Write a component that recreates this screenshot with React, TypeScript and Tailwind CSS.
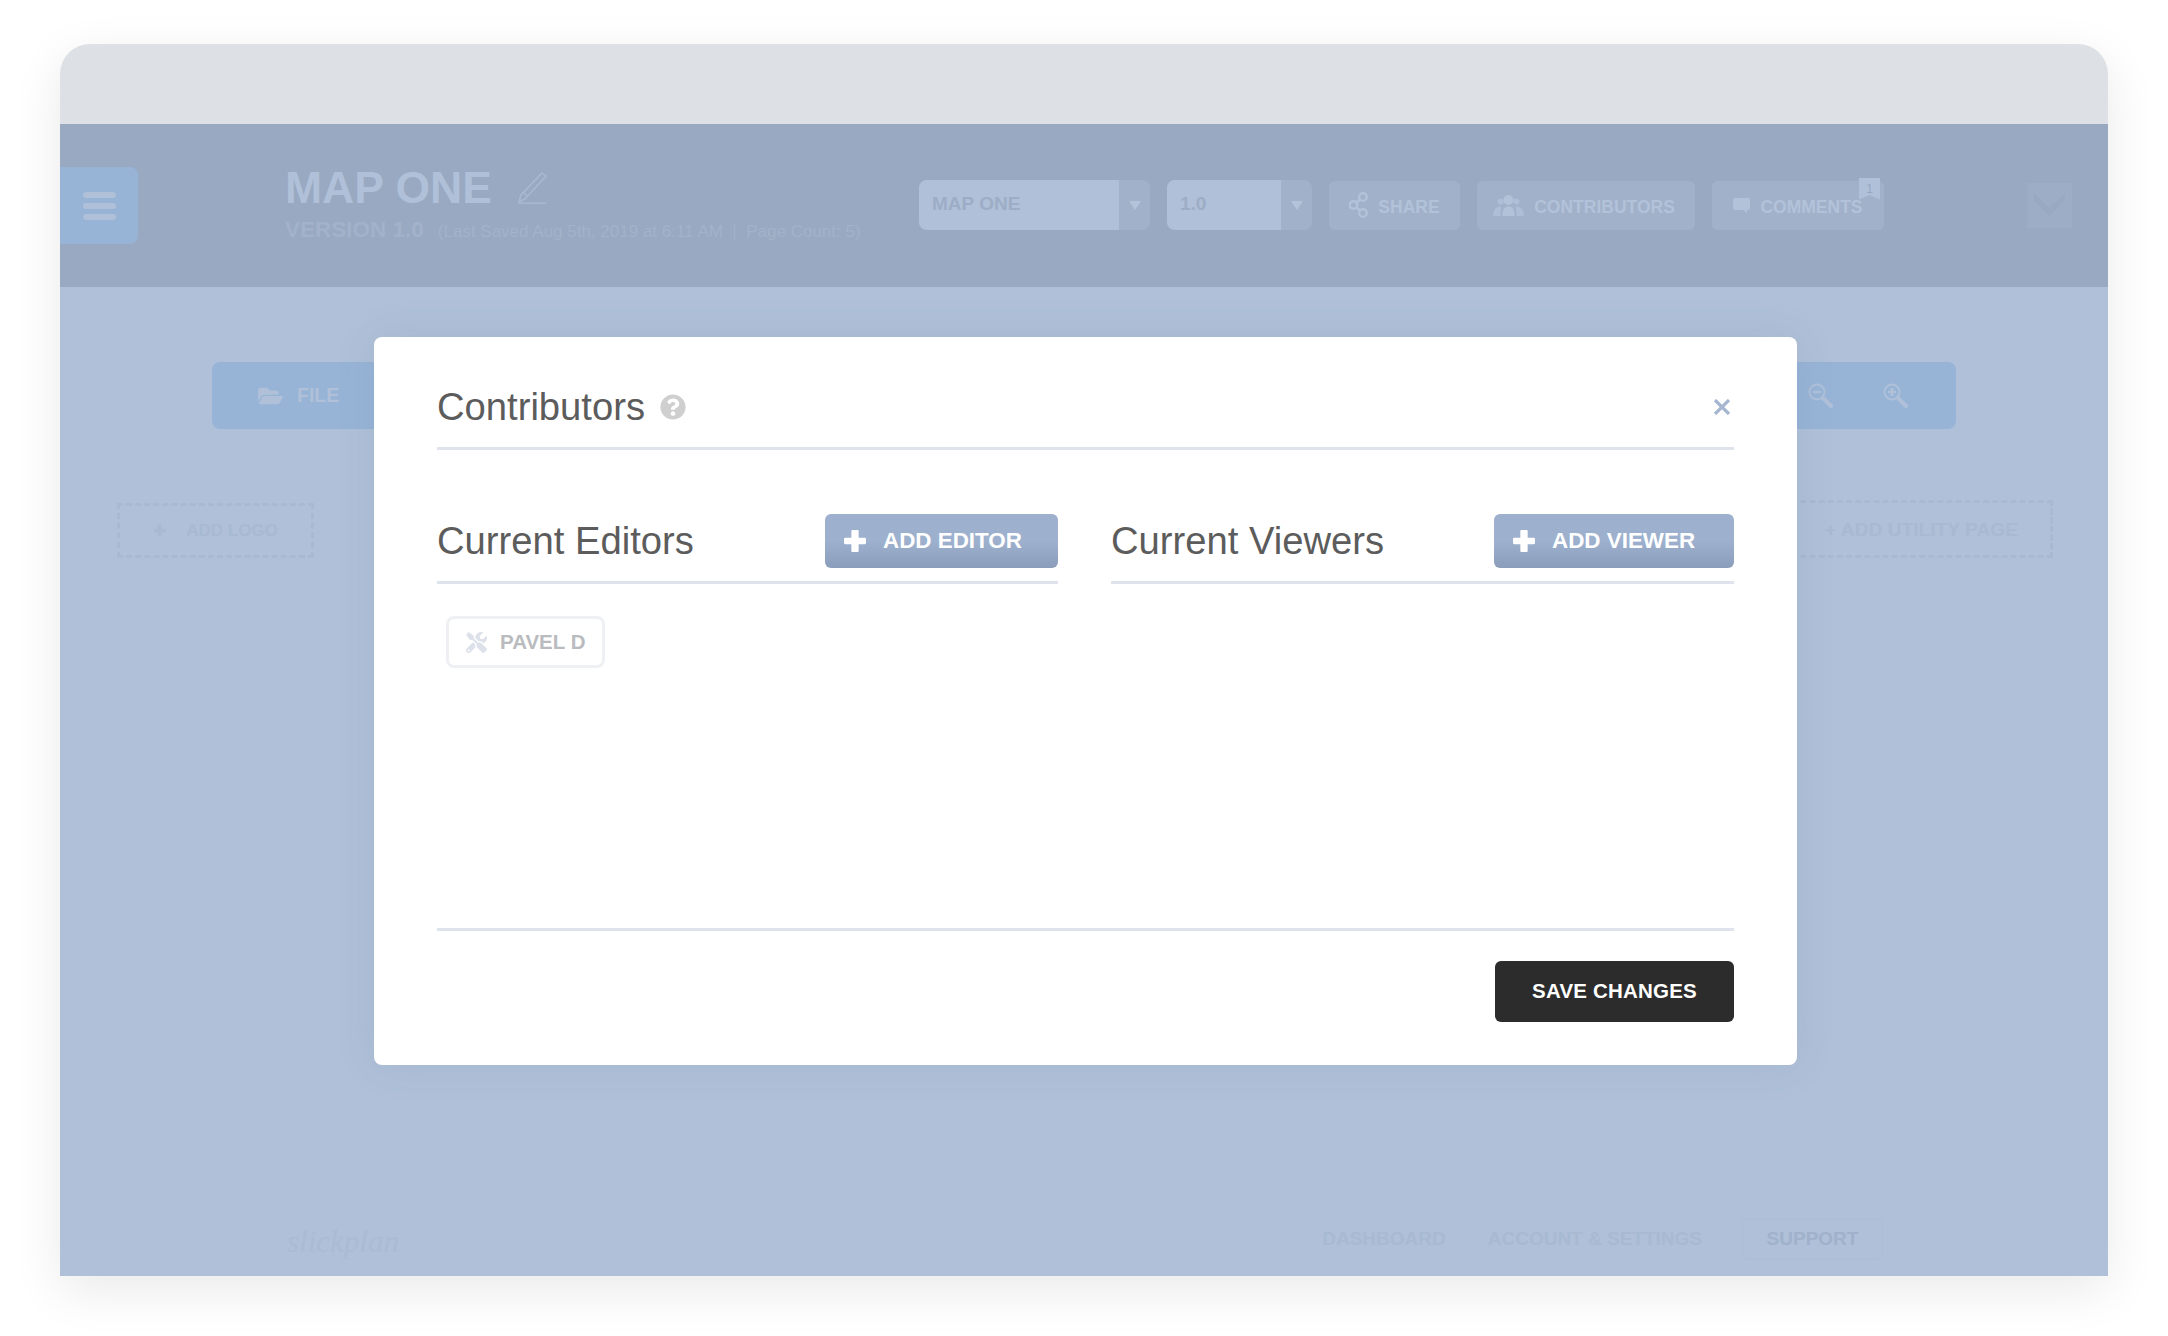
import React from 'react';
import { FaFolderOpen, FaQuestionCircle, FaTools } from 'react-icons/fa';

const PlusIcon = ({ className }: { className: string }) => (
  <svg viewBox="0 0 23 23" className={className} fill="currentColor">
    <path d="M9 1h5a1 1 0 0 1 1 1v6.500h6a1 1 0 0 1 1 1v4a1 1 0 0 1-1 1h-6V21a1 1 0 0 1-1 1H9a1 1 0 0 1-1-1v-6.500H2a1 1 0 0 1-1-1v-4a1 1 0 0 1 1-1h6V2a1 1 0 0 1 1-1z" />
  </svg>
);

const Arrow = () => (
  <svg viewBox="0 0 12 10" className="w-3 h-2.5 text-[#b4c3da]" fill="currentColor">
    <path d="M0 1h12L6 10z" />
  </svg>
);

const ShareIcon = () => (
  <svg viewBox="0 0 19 26" className="w-[19px] h-[26px] text-[#b2c2d9]" fill="none" stroke="currentColor" strokeWidth="2.4">
    <circle cx="14" cy="5" r="3.800" />
    <circle cx="4.500" cy="13" r="3.800" />
    <circle cx="14" cy="21" r="3.800" />
    <path d="M11 7.500 7.500 10.500M7.500 15.500l3.500 3" />
  </svg>
);

const PeopleIcon = () => (
  <svg viewBox="0 0 31 21" className="w-[31px] h-[21px] text-[#b2c2d9]" fill="currentColor">
    <circle cx="15.500" cy="5" r="5" />
    <path d="M9.500 21c0-6 1-9.500 6-9.500s6 3.500 6 9.500z" />
    <circle cx="7.500" cy="6.500" r="3" opacity=".8" />
    <circle cx="23.500" cy="6.500" r="3" opacity=".8" />
    <path d="M0 21c.5-4 1.500-9.500 7.500-9.500.7 0 1 .2 1 .2C7.500 14 7.500 17 7.500 21zM31 21c-.5-4-1.500-9.500-7.500-9.500-.7 0-1 .2-1 .2 1 2.300 1 5.300 1 9.300z" opacity=".8" />
  </svg>
);

const CommentIcon = () => (
  <svg viewBox="0 0 17 15" className="w-[17px] h-[15px] text-[#b2c2d9]" fill="currentColor">
    <path d="M2 0h13a2 2 0 0 1 2 2v8a2 2 0 0 1-2 2h-1v3l-3.500-3H2a2 2 0 0 1-2-2V2a2 2 0 0 1 2-2z" />
  </svg>
);

const PencilIcon = () => (
  <svg viewBox="0 0 32 32" className="w-8 h-8 text-[#a8b9d1]" fill="none" stroke="currentColor" strokeWidth="1.500">
    <path d="M26 1l4 3L9 27l-6 3 2-7zM7.500 20.500l4 3.500" />
    <path d="M2 31.200h28" />
  </svg>
);

// lens with a thick handle, the sign is what differs between in and out
const MagnifierIcon = ({ plus }: { plus?: boolean }) => (
  <svg viewBox="0 0 25 25" className="w-[25px] h-[25px] text-[#afc0d8]" fill="none" stroke="currentColor">
    <circle cx="9" cy="9" r="7.500" strokeWidth="2" />
    <path d="M15 15l8 8" strokeWidth="4" strokeLinecap="round" />
    <path d={plus ? 'M5 9h8M9 5v8' : 'M5 9h8'} strokeWidth="2.500" />
  </svg>
);

const HeaderButton = ({ width, icon, label }: { width: string; icon: React.ReactNode; label: string }) => (
  <div className={`${width} h-[49px] flex items-center justify-center gap-[10px] rounded-md bg-[#a2b1ca] text-[17.500px] font-bold text-[#b2c2d9]`}>
    {icon}
    <span className="mt-[4px]">{label}</span>
  </div>
);

const AddButton = ({ width, label }: { width: string; label: string }) => (
  <button className={`${width} h-[54px] pl-[18px] flex items-center gap-[16px] rounded-md bg-gradient-to-b from-[#9db1ce] from-50% to-[#8a9dbb] text-white text-[22.400px] font-bold`}>
    <PlusIcon className="w-[24px] h-[24px]" />
    {label}
  </button>
);

export default function App() {
  return (
    <div className="h-[1336px] w-[2168px] overflow-hidden bg-white pt-[44px] pl-[60px] font-['Liberation_Sans',Arial,sans-serif]">
      <div className="w-[2048px] h-[1232px] flex flex-col rounded-t-[30px] bg-[#dde0e5] shadow-[0_14px_50px_rgba(0,0,0,0.09)]">
        <div className="h-[80px] shrink-0" />

        <header className="h-[163px] shrink-0 flex items-center bg-[#99a9c1]">
          <div className="w-[78px] h-[77px] flex flex-col items-center justify-center gap-[5px] rounded-r-lg bg-[#97b4d6]">
            <div className="w-[33px] h-[6px] rounded-sm bg-[#afc0d8]" />
            <div className="w-[33px] h-[6px] rounded-sm bg-[#afc0d8]" />
            <div className="w-[33px] h-[6px] rounded-sm bg-[#afc0d8]" />
          </div>

          <div className="w-[781px] pl-[147px] shrink-0 whitespace-nowrap">
            <div className="mt-[1px] flex items-center gap-[24px] h-[44px]">
              <span className="text-[44.500px] leading-[44px] font-bold text-[#afc0d8]">MAP ONE</span>
              <PencilIcon />
            </div>
            <div className="mt-[3px] flex items-baseline gap-[14px] text-[#a3b2ca]">
              <span className="text-[22.500px] font-bold">VERSION 1.0</span>
              <span className="text-[17px]">(Last Saved Aug 5th, 2019 at 6:11 AM &nbsp;|&nbsp; Page Count: 5)</span>
            </div>
          </div>

          <div className="mb-[1px] flex items-center">
            <div className="w-[231px] h-[50px] flex rounded-lg bg-[#a2b1ca]">
              <div className="w-[200px] pl-[13px] pb-[1px] flex items-center rounded-l-lg bg-[#afc0d8] text-[19px] font-bold text-[#9dadc6]">MAP ONE</div>
              <div className="flex-1 flex items-center justify-center">
                <Arrow />
              </div>
            </div>
            <div className="ml-[17px] w-[145px] h-[50px] flex rounded-lg bg-[#a2b1ca]">
              <div className="w-[114px] pl-[13px] pb-[1px] flex items-center rounded-l-lg bg-[#afc0d8] text-[19px] font-bold text-[#9dadc6]">1.0</div>
              <div className="flex-1 flex items-center justify-center">
                <Arrow />
              </div>
            </div>
            <div className="ml-[17px] flex items-center gap-[17px]">
              <HeaderButton width="w-[131px]" icon={<ShareIcon />} label="SHARE" />
              <HeaderButton width="w-[218px] pr-[4px]" icon={<PeopleIcon />} label="CONTRIBUTORS" />
              <div className="relative">
                <HeaderButton width="w-[172px]" icon={<CommentIcon />} label="COMMENTS" />
                <div className="absolute -top-[3px] right-[4px] w-[21px] h-[22px] flex justify-center pt-[2px] bg-[#afc0d8] text-[12px] text-[#96a7c0] [clip-path:polygon(0_0,100%_0,100%_100%,50%_80%,0_100%)]">
                  1
                </div>
              </div>
            </div>
          </div>

          <svg viewBox="0 0 45 45" className="ml-[143px] w-[45px] h-[45px]">
            <rect width="45" height="45" fill="#9dadc5" />
            <path d="M7 10l15.500 15L38 10v8L22.500 33 7 18z" fill="#9aa9c2" />
          </svg>
        </header>

        <main className="relative flex-1 flex flex-col bg-[#afc0d8]">
          <div className="ml-[152px] mt-[75px] w-[1744px] h-[67px] flex items-center justify-between pl-[46px] pr-[48px] rounded-lg bg-[#97b4d6] text-[#afc0d8]">
            <div className="flex items-center gap-[14px]">
              <FaFolderOpen className="w-[25px] h-[22px]" />
              <span className="text-[19.500px] font-bold">FILE</span>
            </div>
            <div className="flex items-center gap-[50px]">
              <MagnifierIcon />
              <MagnifierIcon plus />
            </div>
          </div>

          <div className="mt-[71px] pl-[57px] pr-[55px] flex items-start justify-between">
            <div className="mt-[3px] w-[197px] h-[55px] flex items-center justify-center gap-[20px] border-[3px] border-dashed border-[#a8b9d2] text-[17px] font-bold text-[#a8b9d2]">
              <PlusIcon className="w-[13px] h-[13px]" />
              ADD LOGO
            </div>
            <div className="w-[280px] h-[58px] flex items-center justify-end pr-[32px] pt-[2px] border-[3px] border-dashed border-[#a8b9d2] text-[19.200px] font-bold text-[#a8b9d2]">
              + ADD UTILITY PAGE
            </div>
          </div>

          <footer className="mt-auto pb-[16px] pl-[227px] pr-[225px] flex items-center justify-between">
            <span className="pt-[4px] text-[31px] leading-none italic font-['Liberation_Serif',serif] text-[#aabbd4]">slickplan</span>
            <div className="flex items-center gap-[42px] text-[19px] font-bold">
              <span className="text-[#a8b9d2]">DASHBOARD</span>
              <div className="flex items-center gap-[40px]">
                <span className="text-[#a8b9d2]">ACCOUNT &amp; SETTINGS</span>
                <span className="w-[141px] h-[42px] flex items-center justify-center rounded-md border-2 border-[#adbed6] text-[#a0b1cb]">SUPPORT</span>
              </div>
            </div>
          </footer>

          <div className="absolute left-[314px] top-[50px] w-[1423px] h-[728px] flex flex-col px-[63px] rounded-lg bg-white shadow-[0_0_40px_rgba(80,100,140,0.1)]">
            <div className="pt-[44px] pb-[14px] flex items-center border-b-[3px] border-[#dfe3eb]">
              <h2 className="text-[38.200px] leading-[52px] text-[#5c5c5c]">Contributors</h2>
              <FaQuestionCircle className="ml-[15px] w-[26px] h-[26px] text-[#cfcfcf]" />
              <svg viewBox="0 0 18 16" className="ml-auto mr-[3px] w-[18px] h-[16px] text-[#a6b6d0]" fill="none" stroke="currentColor" strokeWidth="3.200">
                <path d="M2 1l14 14M16 1L2 15" />
              </svg>
            </div>

            <div className="mt-[64px] flex-1 flex justify-between">
              <section className="w-[621px]">
                <div className="pb-[13px] flex items-center justify-between border-b-[3px] border-[#dfe3eb]">
                  <h3 className="text-[38.200px] leading-[54px] text-[#5c5c5c]">Current Editors</h3>
                  <AddButton width="w-[233px]" label="ADD EDITOR" />
                </div>
                <div className="mt-[32px] ml-[9px] w-[159px] h-[52px] flex items-center gap-[13px] pl-[17px] rounded-lg border-[3px] border-[#eef0f4] text-[20.500px] font-bold text-[#b9bbbe]">
                  <FaTools className="w-[21px] h-[21px] text-[#dde2ea]" />
                  PAVEL D
                </div>
              </section>
              <section className="w-[623px]">
                <div className="pb-[13px] flex items-center justify-between border-b-[3px] border-[#dfe3eb]">
                  <h3 className="text-[38.200px] leading-[54px] text-[#5c5c5c]">Current Viewers</h3>
                  <AddButton width="w-[240px]" label="ADD VIEWER" />
                </div>
              </section>
            </div>

            <div className="pt-[30px] pb-[43px] flex justify-end border-t-[3px] border-[#dfe3eb]">
              <button className="w-[239px] h-[61px] pb-[1px] rounded-md bg-[#2c2c2c] text-white text-[20.500px] font-bold tracking-[0.2px]">SAVE CHANGES</button>
            </div>
          </div>
        </main>
      </div>
    </div>
  );
}
